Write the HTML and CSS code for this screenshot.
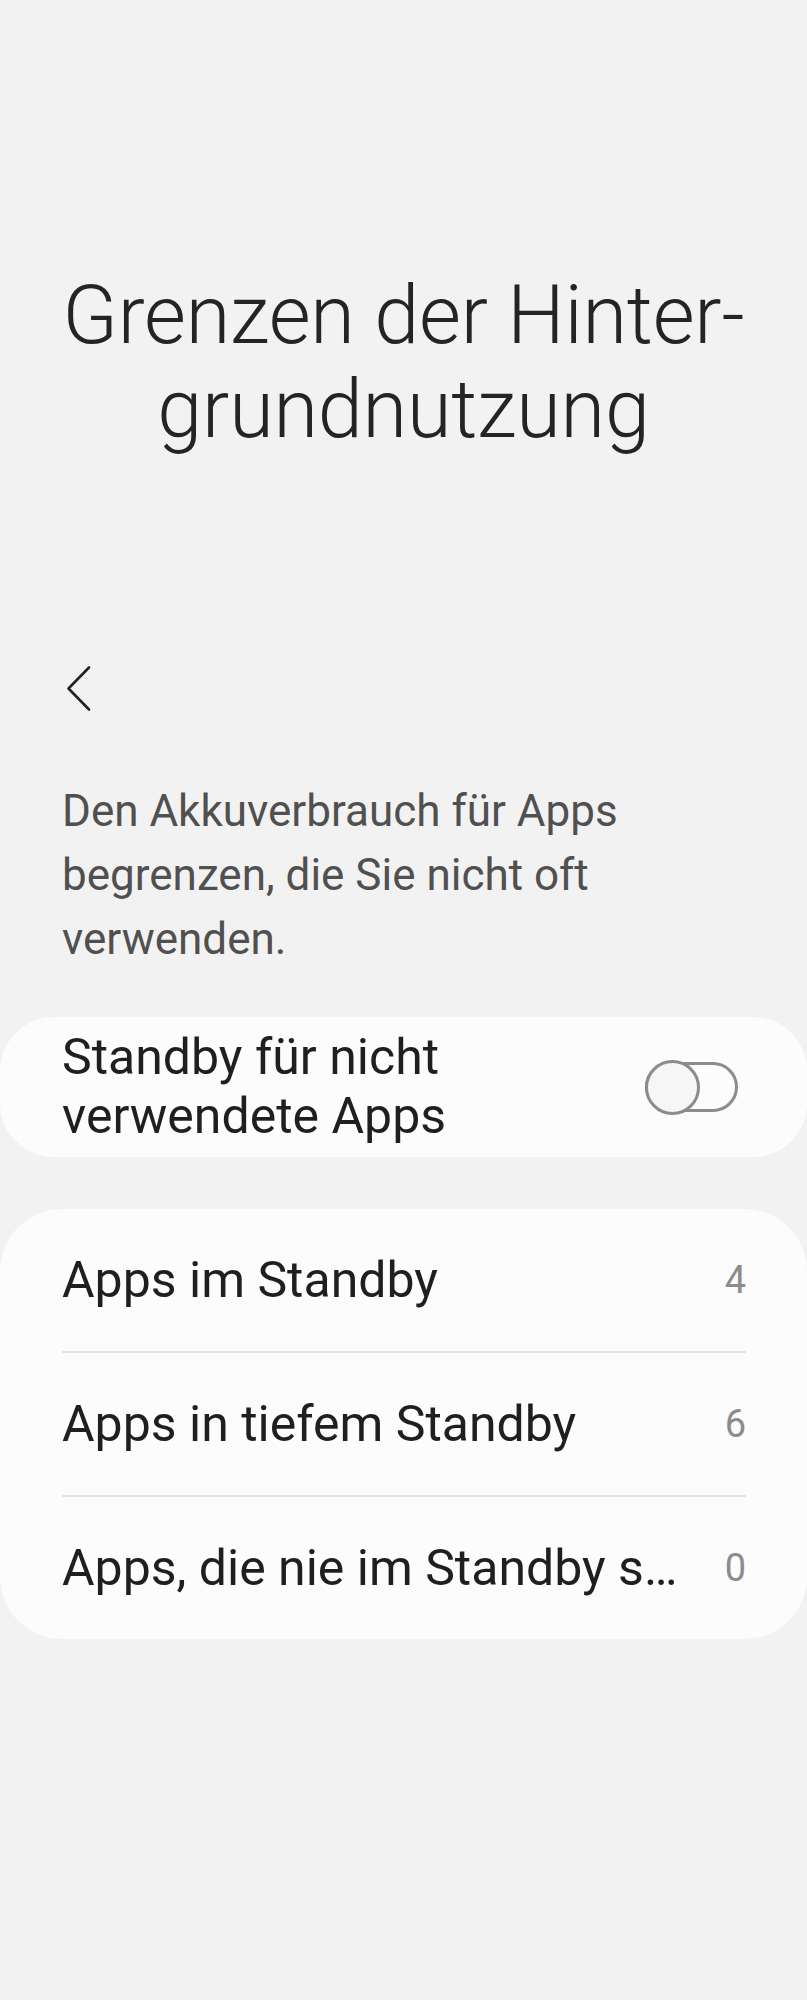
FILE: index.html
```html
<!DOCTYPE html>
<html lang="de">
<head>
<meta charset="utf-8">
<title>Grenzen der Hintergrundnutzung</title>
<link rel="stylesheet" href="styles.css">
</head>
<body>
<main class="page">
  <header class="hero">
    <h1 class="hero-title">Grenzen der Hinter-<br>grundnutzung</h1>
  </header>
  <nav class="toolbar">
    <svg class="back" viewBox="0 0 25 45" width="25" height="45" aria-label="Zurück">
      <path d="M23 1.5 L2.5 22.5 L23 43.5" fill="none" stroke="#222" stroke-width="2.6" stroke-linecap="round" stroke-linejoin="round"/>
    </svg>
  </nav>
  <p class="desc">Den Akkuverbrauch für Apps begrenzen, die Sie nicht oft verwenden.</p>
  <section class="card switch-card">
    <div class="switch-label">Standby für nicht<br>verwendete Apps</div>
    <div class="toggle">
      <span class="track"></span>
      <span class="knob"></span>
    </div>
  </section>
  <section class="card list-card">
    <div class="row"><span class="row-label">Apps im Standby</span><span class="row-count">4</span></div>
    <div class="sep"></div>
    <div class="row"><span class="row-label">Apps in tiefem Standby</span><span class="row-count">6</span></div>
    <div class="sep"></div>
    <div class="row"><span class="row-label">Apps, die nie im Standby s…</span><span class="row-count">0</span></div>
  </section>
</main>
</body>
</html>
```
FILE: styles.css
```css
* { box-sizing: border-box; }
html, body {
  margin: 0;
  padding: 0;
  background: #f2f2f2;
}
body {
  font-family: Roboto, "Noto Sans", "Liberation Sans", sans-serif;
  color: #1f1f1f;
  width: 807px;
  min-height: 2000px;
}
.page {
  display: flex;
  flex-direction: column;
}
.hero {
  padding-top: 269px;
}
.hero-title {
  margin: 0;
  font-weight: 300;
  font-size: 81px;
  line-height: 94px;
  text-align: center;
  color: #242424;
  letter-spacing: -0.2px;
}
.toolbar {
  margin-top: 209px;
  padding-left: 66px;
  height: 45px;
}
.back { display: block; }
.desc {
  margin: 68px 0 0;
  padding: 0 62px;
  font-size: 44px;
  line-height: 64px;
  color: #505050;
}
.card {
  background: #fcfcfc;
}
.switch-card {
  margin-top: 46px;
  height: 140px;
  border-radius: 54px;
  display: flex;
  align-items: center;
  justify-content: space-between;
  padding: 0 69px 0 62px;
}
.switch-label {
  font-size: 50px;
  line-height: 59px;
  color: #1f1f1f;
}
.toggle {
  position: relative;
  width: 93px;
  height: 55px;
  display: flex;
  align-items: center;
}
.track {
  display: block;
  width: 93px;
  height: 50px;
  border: 3px solid #8c8c8c;
  border-radius: 25px;
}
.knob {
  position: absolute;
  left: 0;
  top: 0;
  width: 55px;
  height: 55px;
  border-radius: 50%;
  border: 3px solid #8c8c8c;
  background: #f6f6f6;
}
.list-card {
  margin-top: 52px;
  border-radius: 62px;
  display: flex;
  flex-direction: column;
}
.row {
  height: 142px;
  display: flex;
  align-items: center;
  justify-content: space-between;
  padding: 0 61px 0 62px;
  gap: 40px;
}
.row-label {
  font-size: 50px;
  color: #1f1f1f;
  white-space: nowrap;
  overflow: hidden;
  text-overflow: ellipsis;
}
.row-count {
  font-size: 38px;
  color: #8c8c8c;
}
.sep {
  height: 2px;
  margin: 0 61px 0 62px;
  background: #e3e3e3;
}
```
